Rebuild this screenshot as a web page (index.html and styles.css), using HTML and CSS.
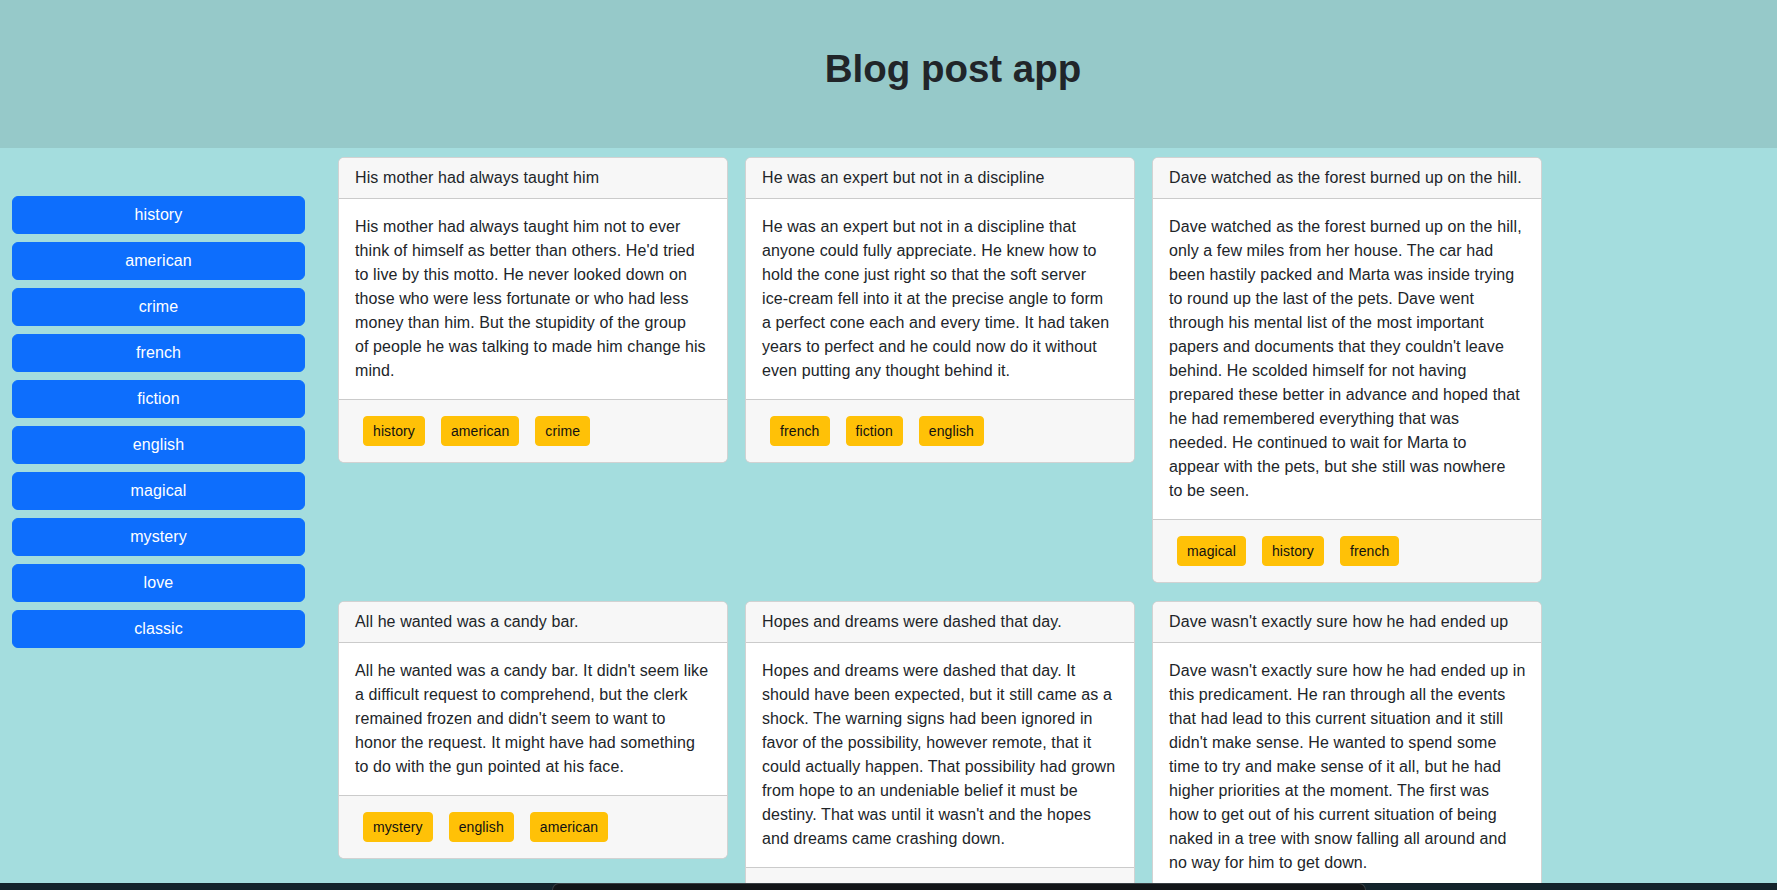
FILE: index.html
```html
<!DOCTYPE html>
<html lang="en">
<head>
<meta charset="utf-8">
<title>Blog post app</title>
<link rel="stylesheet" href="styles.css">
</head>
<body>
<header class="app-header">
  <h1>Blog post app</h1>
</header>
<div class="layout">
  <aside class="tags">
    <button class="tag-btn">history</button>
    <button class="tag-btn">american</button>
    <button class="tag-btn">crime</button>
    <button class="tag-btn">french</button>
    <button class="tag-btn">fiction</button>
    <button class="tag-btn">english</button>
    <button class="tag-btn">magical</button>
    <button class="tag-btn">mystery</button>
    <button class="tag-btn">love</button>
    <button class="tag-btn">classic</button>
  </aside>
  <main class="posts">
    <article class="card">
      <div class="card-header">His mother had always taught him</div>
      <div class="card-body"><p>His mother had always taught him not to ever<br>think of himself as better than others. He'd tried<br>to live by this motto. He never looked down on<br>those who were less fortunate or who had less<br>money than him. But the stupidity of the group<br>of people he was talking to made him change his<br>mind.</p></div>
      <div class="card-footer"><span class="badge">history</span><span class="badge">american</span><span class="badge">crime</span></div>
    </article>
    <article class="card">
      <div class="card-header">He was an expert but not in a discipline</div>
      <div class="card-body"><p>He was an expert but not in a discipline that<br>anyone could fully appreciate. He knew how to<br>hold the cone just right so that the soft server<br>ice-cream fell into it at the precise angle to form<br>a perfect cone each and every time. It had taken<br>years to perfect and he could now do it without<br>even putting any thought behind it.</p></div>
      <div class="card-footer"><span class="badge">french</span><span class="badge">fiction</span><span class="badge">english</span></div>
    </article>
    <article class="card">
      <div class="card-header">Dave watched as the forest burned up on the hill.</div>
      <div class="card-body"><p>Dave watched as the forest burned up on the hill,<br>only a few miles from her house. The car had<br>been hastily packed and Marta was inside trying<br>to round up the last of the pets. Dave went<br>through his mental list of the most important<br>papers and documents that they couldn't leave<br>behind. He scolded himself for not having<br>prepared these better in advance and hoped that<br>he had remembered everything that was<br>needed. He continued to wait for Marta to<br>appear with the pets, but she still was nowhere<br>to be seen.</p></div>
      <div class="card-footer"><span class="badge">magical</span><span class="badge">history</span><span class="badge">french</span></div>
    </article>
    <article class="card">
      <div class="card-header">All he wanted was a candy bar.</div>
      <div class="card-body"><p>All he wanted was a candy bar. It didn't seem like<br>a difficult request to comprehend, but the clerk<br>remained frozen and didn't seem to want to<br>honor the request. It might have had something<br>to do with the gun pointed at his face.</p></div>
      <div class="card-footer"><span class="badge">mystery</span><span class="badge">english</span><span class="badge">american</span></div>
    </article>
    <article class="card">
      <div class="card-header">Hopes and dreams were dashed that day.</div>
      <div class="card-body"><p>Hopes and dreams were dashed that day. It<br>should have been expected, but it still came as a<br>shock. The warning signs had been ignored in<br>favor of the possibility, however remote, that it<br>could actually happen. That possibility had grown<br>from hope to an undeniable belief it must be<br>destiny. That was until it wasn't and the hopes<br>and dreams came crashing down.</p></div>
      <div class="card-footer"><span class="badge">crime</span><span class="badge">magical</span><span class="badge">love</span></div>
    </article>
    <article class="card">
      <div class="card-header">Dave wasn't exactly sure how he had ended up</div>
      <div class="card-body"><p>Dave wasn't exactly sure how he had ended up in<br>this predicament. He ran through all the events<br>that had lead to this current situation and it still<br>didn't make sense. He wanted to spend some<br>time to try and make sense of it all, but he had<br>higher priorities at the moment. The first was<br>how to get out of his current situation of being<br>naked in a tree with snow falling all around and<br>no way for him to get down.</p></div>
      <div class="card-footer"><span class="badge">mystery</span><span class="badge">classic</span><span class="badge">fiction</span></div>
    </article>
  </main>
</div>
<div class="dock"><div class="dock-window"></div></div>
</body>
</html>
```

FILE: styles.css
```css
* {
  box-sizing: border-box;
}

body {
  margin: 0;
  background: #a4ddde;
  color: #212529;
  font-family: "Liberation Sans", Arial, sans-serif;
  font-size: 16px;
  line-height: 24px;
  letter-spacing: 0.1px;
}

.app-header {
  height: 148px;
  background: #96c9c9;
  padding: 45px 0 0 129px;
  text-align: center;
}

.app-header h1 {
  margin: 0;
  font-size: 38.5px;
  line-height: 48px;
  font-weight: 700;
  letter-spacing: 0;
  color: #212529;
}

.layout {
  display: flex;
  align-items: flex-start;
}

.tags {
  width: 293px;
  margin: 48px 0 0 12px;
  display: flex;
  flex-direction: column;
  gap: 8px;
  flex: none;
}

.tag-btn {
  height: 38px;
  padding: 6px 12px;
  background: #0d6efd;
  color: #fff;
  border: 1px solid #0d6efd;
  border-radius: 6px;
  font: inherit;
  letter-spacing: inherit;
  text-align: center;
}

.posts {
  margin: 9px 0 0 33px;
  display: grid;
  grid-template-columns: repeat(3, 389.5px);
  gap: 17.5px;
  align-items: start;
}

.card {
  background: #fff;
  border: 1px solid rgba(0, 0, 0, 0.175);
  border-radius: 6px;
  overflow: hidden;
}

.card-header {
  background: #f7f7f7;
  padding: 8px 16px;
  border-bottom: 1px solid rgba(0, 0, 0, 0.175);
  white-space: nowrap;
}

.card-body {
  padding: 16px;
}

.card-body p {
  margin: 0;
  white-space: nowrap;
}

.card-footer {
  background: #f7f7f7;
  padding: 8px 16px;
  border-top: 1px solid rgba(0, 0, 0, 0.175);
  display: flex;
  flex-wrap: wrap;
}

.badge {
  margin: 8px;
  background: #ffc107;
  border: 1px solid #ffc107;
  border-radius: 4px;
  padding: 4px 9px;
  font-size: 14px;
  line-height: 20px;
  color: #111;
}

.dock {
  position: fixed;
  left: 0;
  right: 0;
  bottom: 0;
  height: 7px;
  background: #13232b;
}

.dock-window {
  position: absolute;
  left: 552px;
  width: 814px;
  top: 0;
  bottom: 0;
  background: #121518;
  border: 1px solid #3a3f44;
  border-bottom: none;
  border-radius: 9px 9px 0 0;
}
```
